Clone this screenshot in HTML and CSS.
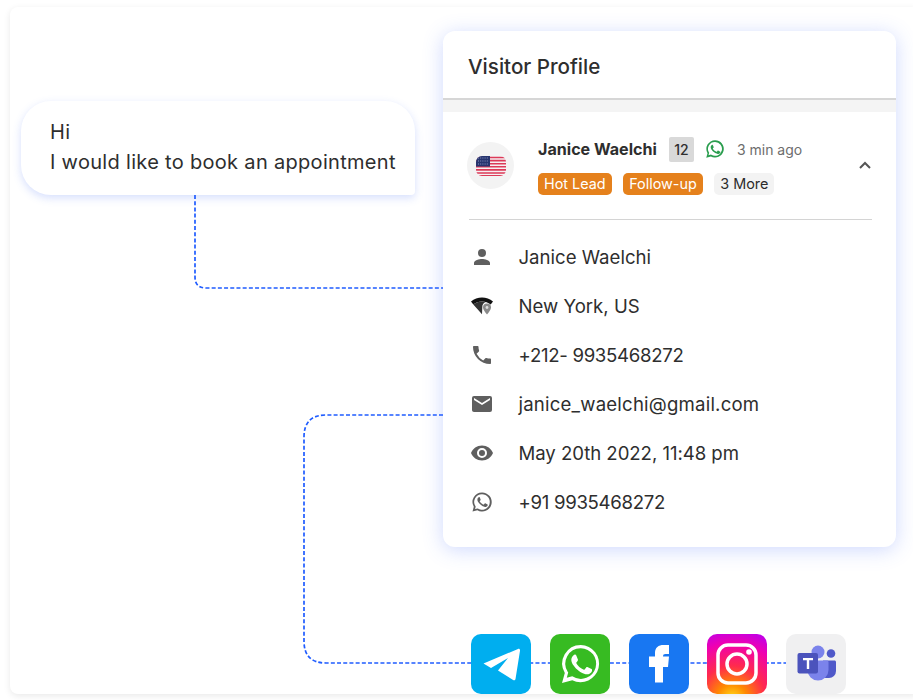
FILE: index.html
```html
<!DOCTYPE html>
<html lang="en">
<head>
<meta charset="utf-8">
<title>Visitor Profile</title>
<link rel="stylesheet" href="styles.css">
</head>
<body>
<main class="canvas">
  <svg class="wires" width="903" height="687" viewBox="0 0 903 687" fill="none">
    <path d="M185 188V270Q185 281 196 281H433" />
    <path d="M433 408H316Q294 408 294 430V634Q294 656 316 656H776" />
  </svg>

  <div class="bubble">
    <p>Hi</p>
    <p>I would like to book an appointment</p>
  </div>

  <section class="profile">
    <h1 class="profile-title">Visitor Profile</h1>
    <div class="band"></div>
    <div class="summary">
      <div class="avatar">
        <svg width="30" height="20" viewBox="0 0 30 20">
          <defs><clipPath id="fl"><rect width="30" height="20" rx="6"/></clipPath></defs>
          <g clip-path="url(#fl)">
            <rect width="30" height="20" fill="#f6f0f2"/>
            <path d="M0 1.500h30M0 4.600h30M0 7.700h30M0 10.800h30M0 13.900h30M0 17h30M0 19.800h30" stroke="#dc3a58" stroke-width="1.600"/>
            <rect width="14" height="10.500" fill="#27356f"/>
            <path d="M2 2h10M2 5h10M2 8h10" stroke="#8d96c4" stroke-width="1" stroke-dasharray="1 1.200"/>
          </g>
        </svg>
      </div>
      <div class="who">
        <div class="who-top">
          <strong class="name">Janice Waelchi</strong>
          <span class="count">12</span>
          <svg class="wa" width="20" height="20" viewBox="0 0 24 24"><path fill="#2a9d4e" d="M12 1.500A10.400 10.400 0 0 0 3 17.100L1.500 22.500l5.600-1.500A10.400 10.400 0 1 0 12 1.500Zm0 2.100a8.300 8.300 0 1 1-4.400 15.300l-.4-.2-3 .8.8-2.900-.2-.4A8.300 8.300 0 0 1 12 3.600ZM8.600 7.100c-.2 0-.5.100-.8.400-.3.300-1 1-1 2.400s1 2.800 1.200 3c.1.200 2 3.100 4.900 4.300 2.400 1 2.900.8 3.400.7.500 0 1.700-.7 1.900-1.300.2-.7.2-1.200.2-1.300-.1-.2-.3-.2-.6-.4l-2-1c-.3-.1-.5-.1-.7.200l-.9 1.100c-.2.2-.3.2-.6.100-.3-.2-1.300-.5-2.400-1.500-.9-.8-1.500-1.800-1.700-2.100-.2-.3 0-.5.100-.6l.5-.5.300-.5c.1-.2 0-.4 0-.5l-.9-2.200c-.2-.5-.5-.5-.7-.5h-.6Z"/></svg>
          <span class="ago">3 min ago</span>
        </div>
        <div class="tags">
          <span class="tag tag-orange">Hot Lead</span>
          <span class="tag tag-orange">Follow-up</span>
          <span class="tag tag-grey">3 More</span>
        </div>
      </div>
      <svg class="chevron" width="14" height="9" viewBox="0 0 14 9" fill="none"><path d="M2 7l5-5 5 5" stroke="#555" stroke-width="2"/></svg>
    </div>
    <ul class="facts">
      <li><svg width="24" height="24" viewBox="0 0 24 24"><path fill="#5f5f5f" d="M12 12a4 4 0 1 0 0-8 4 4 0 0 0 0 8Zm0 2c-2.700 0-8 1.300-8 4v2h16v-2c0-2.700-5.300-4-8-4Z"/></svg><span>Janice Waelchi</span></li>
      <li><svg width="24" height="24" viewBox="0 0 24 24"><path fill="#111" d="M1 7.500C4 4.800 8 3.600 12 3.600s8 1.200 11 3.900l-2.300 3C18.200 8.500 15.200 7.500 12 7.500S5.800 8.500 3.300 10.500Z"/><path fill="#333" d="M3.300 10.500C5.800 8.500 8.800 7.500 12 7.500c1.300 0 2.600.2 3.800.5-2.200.8-3.700 2.800-3.500 5.200L12 20.200Z"/><path fill="#8a8a8a" d="M17 9.500a4 4 0 0 1 4 4c0 2.600-4 7-4 7s-4-4.400-4-7a4 4 0 0 1 4-4Z"/><circle cx="17" cy="13.500" r="1.400" fill="#ddd"/></svg><span>New York, US</span></li>
      <li><svg width="24" height="24" viewBox="0 0 24 24"><path fill="#5f5f5f" d="M6.600 10.800a15 15 0 0 0 6.600 6.600l2.200-2.200c.3-.3.700-.4 1-.2 1.100.4 2.300.6 3.600.6.600 0 1 .4 1 1V20c0 .6-.4 1-1 1A17 17 0 0 1 3 4c0-.6.400-1 1-1h3.500c.6 0 1 .4 1 1 0 1.300.2 2.500.6 3.600.1.300 0 .7-.2 1Z"/></svg><span class="digits">+212- 9935468272</span></li>
      <li><svg width="24" height="24" viewBox="0 0 24 24"><path fill="#5f5f5f" d="M20 4H4a2 2 0 0 0-2 2v12c0 1.100.9 2 2 2h16a2 2 0 0 0 2-2V6a2 2 0 0 0-2-2Zm0 4-8 5-8-5V6l8 5 8-5Z"/></svg><span class="mail">janice_waelchi@gmail.com</span></li>
      <li><svg width="24" height="24" viewBox="0 0 24 24"><path fill="#5f5f5f" d="M12 4.500C7 4.500 2.700 7.600 1 12c1.700 4.400 6 7.500 11 7.500s9.300-3.100 11-7.500c-1.700-4.400-6-7.500-11-7.500ZM12 17a5 5 0 1 1 0-10 5 5 0 0 1 0 10Zm0-8a3 3 0 1 0 0 6 3 3 0 0 0 0-6Z"/></svg><span class="date">May 20th 2022, 11:48 pm</span></li>
      <li><svg width="24" height="24" viewBox="0 0 24 24"><path fill="#5f5f5f" d="M12 2.500A9.500 9.500 0 0 0 3.800 16.800L2.500 21.500l4.900-1.300A9.500 9.500 0 1 0 12 2.500Zm0 1.700a7.800 7.800 0 1 1-4.200 14.400l-.3-.2-2.500.7.700-2.400-.2-.4A7.800 7.800 0 0 1 12 4.200ZM9 7.300c-.2 0-.4 0-.7.300-.3.300-.9.900-.9 2.100s.9 2.500 1 2.600c.1.200 1.800 2.800 4.400 3.900 2.100.9 2.600.7 3 .7.500-.1 1.500-.6 1.700-1.200.2-.6.2-1.100.1-1.200l-.5-.3-1.800-.9c-.2-.1-.4-.1-.6.200l-.8 1c-.1.100-.3.200-.5.100-.3-.1-1.100-.4-2.100-1.300-.8-.7-1.300-1.600-1.500-1.900-.2-.3 0-.4.100-.5l.4-.5.300-.4v-.5l-.8-2c-.2-.5-.4-.4-.6-.4Z"/></svg><span class="digits">+91 9935468272</span></li>
    </ul>
  </section>

  <div class="channels">
    <span class="channel ch-telegram"><svg width="60" height="60" viewBox="0 0 60 60"><path fill="#fff" d="M12.500 29.500 47 15c1.300-.5 2.300.5 2 1.800L44.500 45c-.2 1.300-1.400 1.600-2.400 1L27 36.500 37 24 20 34Z"/></svg></span>
    <span class="channel ch-whatsapp"><svg width="60" height="60" viewBox="0 0 60 60"><path fill="#fff" d="M30.800 11A18.600 18.600 0 0 0 14.800 39L12 49l10.300-2.700A18.600 18.600 0 1 0 30.800 11Zm0 3.300a15.300 15.300 0 1 1-8 28.300l-.6-.3-5.400 1.400 1.400-5.200-.4-.6A15.300 15.300 0 0 1 30.800 14.300ZM24.500 21c-.4 0-.9.100-1.400.7-.5.500-1.800 1.800-1.800 4.300s1.900 5 2.100 5.300c.3.300 3.600 5.500 8.800 7.600 4.300 1.700 5.200 1.400 6.100 1.300.9-.1 3-1.200 3.400-2.400.4-1.200.4-2.200.3-2.400-.1-.2-.5-.3-1-.6l-3.600-1.700c-.5-.2-.8-.3-1.200.3l-1.600 2c-.3.300-.6.400-1.100.1-.5-.3-2.200-.8-4.200-2.600-1.600-1.400-2.600-3.100-2.900-3.700-.3-.5 0-.8.200-1l.8-1 .5-.9c.2-.3.100-.6 0-.9l-1.600-3.800c-.4-1-.9-1-1.200-1h-1Z"/></svg></span>
    <span class="channel ch-facebook"><svg width="60" height="60" viewBox="0 0 60 60"><path fill="#fff" d="M26 48.500V33h-6V22.500h6V19c0-5.500 3.500-8 8.500-8h5.500v9h-3.500c-1.800 0-2.500.8-2.500 2.500h6l-1 10.500h-5v15.500Z"/></svg></span>
    <span class="channel ch-instagram"><svg width="60" height="60" viewBox="0 0 60 60" fill="none"><rect x="11" y="11" width="38" height="38" rx="10" stroke="#fff" stroke-width="3.500"/><circle cx="30" cy="30" r="10" stroke="#fff" stroke-width="3.500"/><circle cx="42" cy="18" r="2.800" fill="#fff"/></svg></span>
    <span class="channel ch-teams"><svg width="60" height="60" viewBox="0 0 60 60"><circle cx="45" cy="19.500" r="4.300" fill="#5059c9"/><path fill="#5059c9" d="M37 26.500h11.500c.8 0 1.500.7 1.500 1.500v9a7 7 0 0 1-7 7h-6Z"/><circle cx="32" cy="18" r="6.500" fill="#7b83eb"/><path fill="#7b83eb" d="M22 26.500h19c.8 0 1.500.7 1.500 1.500v8a10.500 10.500 0 0 1-21 0Z"/><rect x="11.500" y="19" width="20.500" height="20.500" rx="2" fill="#4b53bc"/><path fill="#fff" d="M17 24h10v2.200h-3.800V35h-2.400v-8.800H17Z"/></svg></span>
  </div>
</main>
</body>
</html>
```
FILE: styles.css
```css
* { box-sizing: border-box; }
html, body { margin: 0; }
body {
  width: 913px;
  height: 700px;
  overflow: hidden;
  background: #fff;
  padding: 7px 0 0 10px;
  font-family: "Inter", "Liberation Sans", sans-serif;
  color: #2e2e2e;
}
.canvas {
  position: relative;
  width: 910px;
  height: 687px;
  background: #fff;
  border-radius: 8px;
  box-shadow: 0 2px 7px rgba(0, 0, 0, .09);
}
.wires { position: absolute; left: 0; top: 0; }
.wires path { stroke: #1f5cff; stroke-width: 1.700; stroke-dasharray: 4 2.200; }

.bubble {
  position: absolute;
  left: 11px;
  top: 94px;
  width: 394px;
  height: 94px;
  padding: 16px 0 0 29px;
  background: #fff;
  border-radius: 30px 30px 4px 30px;
  box-shadow: 0 3px 8px rgba(70, 110, 245, .22);
  font-size: 20px;
  line-height: 30px;
  letter-spacing: .31px;
}
.bubble p { margin: 0; white-space: nowrap; }

.profile {
  position: absolute;
  left: 433px;
  top: 24px;
  width: 453px;
  height: 516px;
  background: #fff;
  border-radius: 12px;
  box-shadow: 0 3px 20px rgba(70, 110, 250, .26);
  overflow: hidden;
}
.profile-title {
  margin: 0;
  height: 67px;
  padding: 3px 25px 0;
  display: flex;
  align-items: center;
  font-size: 20.600px;
  font-weight: 500;
}
.band {
  height: 14px;
  background: #f4f4f4;
  border-top: 2px solid #d6d6d6;
}
.summary {
  display: flex;
  align-items: center;
  margin: 0 24px 0 26px;
  height: 108px;
  border-bottom: 1px solid #d4d4d4;
}
.avatar {
  width: 47px;
  height: 47px;
  margin-left: -2px;
  border-radius: 50%;
  background: #f3f3f3;
  display: flex;
  align-items: center;
  justify-content: center;
  flex: none;
}
.who { margin-left: 24px; flex: 1; }
.who-top { display: flex; align-items: center; height: 25px; }
.name { font-size: 16.100px; font-weight: 700; white-space: nowrap; }
.count {
  margin-left: 12px;
  width: 25px;
  height: 25px;
  background: #d9d9d9;
  border-radius: 2px;
  font-size: 14px;
  font-weight: 500;
  display: flex;
  align-items: center;
  justify-content: center;
}
.wa { margin-left: 11px; }
.ago { margin-left: 12px; color: #6d6d6d; font-size: 14px; }
.tags { display: flex; gap: 11.500px; margin-top: 11px; }
.tag {
  height: 22px;
  padding: 0 6px;
  border-radius: 5px;
  font-size: 14.400px;
  line-height: 22px;
  white-space: nowrap;
}
.tag-orange { background: #e5811c; color: #fff; }
.tag-grey { background: #f3f3f3; color: #2b2b2b; }
.chevron { flex: none; }

.facts {
  list-style: none;
  margin: 0;
  padding: 12px 0 0 27px;
}
.facts li {
  display: flex;
  align-items: center;
  height: 49px;
  font-size: 18.600px;
  white-space: nowrap;
}
.facts svg { flex: none; margin-right: 24.500px; }
.digits { letter-spacing: -.3px; }
.mail { letter-spacing: .2px; }
.date { letter-spacing: -.05px; }

.channels {
  position: absolute;
  left: 461px;
  top: 627px;
  display: flex;
  gap: 18.750px;
}
.channel {
  display: block;
  width: 60px;
  height: 60px;
  border-radius: 10px;
}
.ch-telegram { background: #00aeef; }
.ch-whatsapp { background: #37bb22; }
.ch-facebook { background: #1877f2; }
.ch-instagram { background: radial-gradient(circle at 42% 108%, #ffe01a 0%, #ff8a00 20%, #ff2a4d 45%, #f000b0 75%, #b400f5 100%); }
.ch-teams { background: #f0f0f1; }
```
